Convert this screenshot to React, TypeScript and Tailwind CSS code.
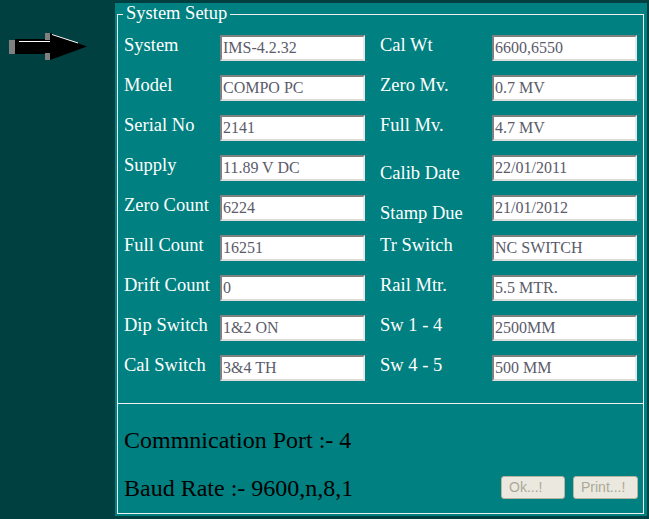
import React from 'react';

const rows: [string, string, string, string, boolean][] = [
    ['System', 'IMS-4.2.32', 'Cal Wt', '6600,6550', false],
    ['Model', 'COMPO PC', 'Zero Mv.', '0.7 MV', false],
    ['Serial No', '2141', 'Full Mv.', '4.7 MV', false],
    ['Supply', '11.89 V DC', 'Calib Date', '22/01/2011', true],
    ['Zero Count', '6224', 'Stamp Due', '21/01/2012', true],
    ['Full Count', '16251', 'Tr Switch', 'NC SWITCH', false],
    ['Drift Count', '0', 'Rail Mtr.', '5.5 MTR.', false],
    ['Dip Switch', '1&2 ON', 'Sw 1 - 4', '2500MM', false],
    ['Cal Switch', '3&4 TH', 'Sw 4 - 5', '500 MM', false],
];

const serif = { fontFamily: '"Liberation Serif", "Times New Roman", serif' };

const Field = ({ value }: { value: string }) => (
    <input
        readOnly
        value={value}
        className="w-[145px] h-[26px] px-[1px] bg-white text-[16px] leading-[18px] text-[#5b5b6b] outline-none border-2 border-t-[#808080] border-l-[#808080] border-b-[#dcdcdc] border-r-[#e8e8e8]"
        style={serif}
    />
);

const Arrow = () => (
    <svg width="90" height="40" viewBox="0 28 90 40" className="ml-0 mt-[28px]">
        <rect x="9" y="40" width="6" height="14" fill="#808080" />
        <rect x="15" y="39" width="35" height="15" fill="#000" />
        <rect x="45" y="33" width="5" height="7" fill="#808080" />
        <rect x="45" y="53" width="5" height="7" fill="#808080" />
        <polygon points="50,33 87,46.5 50,60" fill="#000" />
        <line x1="19" y1="41.5" x2="50" y2="41.5" stroke="#fff" strokeWidth="1" />
        <line x1="52" y1="34.5" x2="78" y2="43" stroke="#fff" strokeWidth="1" />
    </svg>
);

const App = () => {
    return (
        <div className="w-[649px] h-[519px] bg-[#004040] flex overflow-hidden" style={serif}>
            <div className="w-[115px] shrink-0">
                <Arrow />
            </div>

            <div className="w-[532px] h-[513px] mt-[3px] bg-[#008080] pl-[2px] pr-[3px] pb-[2px] flex flex-col">
                {/* legend row */}
                <div className="flex items-start h-[21px]">
                    <div className="w-[6px] h-full mt-[11px] border-t border-l border-[#f0f0f0]" />
                    <span className="px-[3px] text-[18.5px] leading-[21px] text-white">System Setup</span>
                    <div className="flex-1 h-full mt-[11px] border-t border-r border-[#f0f0f0]" />
                </div>

                <div className="flex-1 flex flex-col border-l border-r border-b border-[#f0f0f0] pt-[11px]">
                    <div className="pl-[6px]">
                        {rows.map(([l1, v1, l2, v2, low]) => (
                            <div key={l1} className="flex items-start h-[40px]">
                                <span className="w-[96px] text-[18.5px] leading-[21px] text-white">{l1}</span>
                                <Field value={v1} />
                                <span className={`ml-[15px] w-[112px] text-[18.5px] leading-[21px] text-white ${low ? 'pt-[8px]' : ''}`}>{l2}</span>
                                <Field value={v2} />
                            </div>
                        ))}
                    </div>

                    <div className="mt-[8px] h-[1px] bg-[#f0f0f0]" />

                    <div className="flex items-end justify-between pl-[6px] pr-[5px] pt-[22px] pb-[11px]">
                        <div className="text-black text-[24px] leading-[28px]">
                            <div>Commnication Port :- 4</div>
                            <div className="mt-[20px]">Baud Rate :- 9600,n,8,1</div>
                        </div>
                        <div className="flex gap-[8px] mb-[3px]" style={{ fontFamily: '"Liberation Sans", Arial, sans-serif' }}>
                            <button disabled className="w-[64px] h-[23px] pl-[7px] text-left text-[14px] text-[#aca899] bg-[#ebe8df] border border-[#b8b4a0] rounded-[3px]">
                                Ok...!
                            </button>
                            <button disabled className="w-[65px] h-[23px] pl-[7px] text-left text-[14px] text-[#aca899] bg-[#ebe8df] border border-[#b8b4a0] rounded-[3px]">
                                Print...!
                            </button>
                        </div>
                    </div>
                </div>
            </div>
        </div>
    );
};

export default App;
